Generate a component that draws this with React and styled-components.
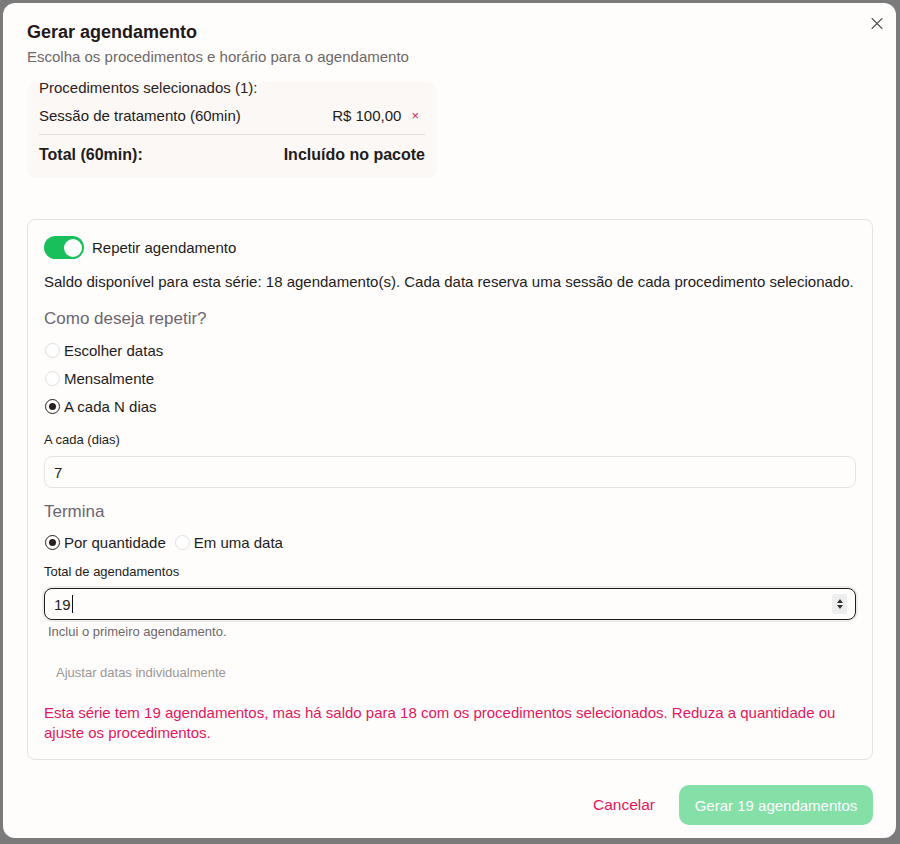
import styled, { createGlobalStyle } from "styled-components";
import { X } from "lucide-react";

const GlobalStyle = createGlobalStyle`
  * { box-sizing: border-box; }
  body {
    margin: 0;
    background: #7b7b7b;
    font-family: "Liberation Sans", Arial, sans-serif;
    color: #221c1c;
  }
`;

const Backdrop = styled.div`
  height: 844px;
  padding: 3px 4px 6px 3px;
  display: flex;
`;

const Modal = styled.div`
  position: relative;
  flex: 1;
  background: #fffdfc;
  border-radius: 12px;
  padding: 18px 23px 13px 24px;
  display: flex;
  flex-direction: column;
`;

const CloseButton = styled.button`
  position: absolute;
  top: 10px;
  right: 9px;
  width: 20px;
  height: 20px;
  border: 0;
  padding: 0;
  background: none;
  color: #555;
  display: flex;
  align-items: center;
  justify-content: center;
`;

const Title = styled.h2`
  margin: 0;
  font-size: 18px;
  line-height: 22px;
  font-weight: 600;
  color: #1f1919;
`;

const Subtitle = styled.p`
  margin: 3px 0 0;
  font-size: 15px;
  line-height: 22px;
  color: #6d6868;
`;

const Summary = styled.div`
  width: 410px;
  margin-top: 14px;
  background: #fcf8f6;
  border-radius: 8px;
  padding: 0 12px 11px;
`;

const SummaryTitle = styled.div`
  font-size: 15px;
  line-height: 12px;
  color: #2a2323;
`;

const SummaryRow = styled.div`
  display: flex;
  align-items: center;
  justify-content: space-between;
  margin-top: 11px;
  padding-bottom: 7px;
  border-bottom: 1px solid #e3dedc;
  font-size: 15px;
  line-height: 22px;
`;

const Price = styled.div`
  display: flex;
  align-items: center;
  gap: 10px;
  margin-right: 6px;
`;

const Remove = styled.span`
  color: #e0224a;
  font-size: 13px;
`;

const TotalRow = styled.div`
  display: flex;
  justify-content: space-between;
  margin-top: 8px;
  font-size: 16px;
  line-height: 24px;
  font-weight: 700;
`;

const Card = styled.section`
  margin-top: 41px;
  border: 1px solid #e6e2e0;
  border-radius: 8px;
  padding: 16px 16px 16px;
  display: flex;
  flex-direction: column;
`;

const ToggleRow = styled.label`
  display: flex;
  align-items: center;
  gap: 8px;
  font-size: 15px;
`;

const Switch = styled.span`
  width: 40px;
  height: 23px;
  border-radius: 12px;
  background: #19bf5b;
  display: flex;
  align-items: center;
  justify-content: flex-end;
  padding: 2px;
  &::after {
    content: "";
    width: 18px;
    height: 18px;
    border-radius: 50%;
    background: #fff;
  }
`;

const Text = styled.p`
  margin: ${(p) => p.$mt || 0}px 0 0;
  font-size: 15px;
  line-height: ${(p) => (p.$error ? 20 : 22)}px;
  color: ${(p) => (p.$error ? "#e3165c" : "#221c1c")};
`;

const SectionTitle = styled.h3`
  margin: ${(p) => p.$mt}px 0 0;
  font-size: 17px;
  line-height: 24px;
  font-weight: 400;
  color: #6b6670;
`;

const RadioGroup = styled.div`
  margin-top: ${(p) => (p.$inline ? 8 : 9)}px;
  display: flex;
  flex-direction: ${(p) => (p.$inline ? "row" : "column")};
  gap: 8px;
`;

const RadioOption = styled.label`
  display: flex;
  align-items: center;
  gap: 4px;
  height: 20px;
  font-size: 15px;
  color: #221c1c;
`;

const RadioCircle = styled.span`
  width: 15px;
  height: 15px;
  margin-left: 1px;
  border-radius: 50%;
  border: ${(p) => (p.$checked ? "1.5px solid #2a1e1e" : "1px solid #e2dddb")};
  background: #fff;
  display: flex;
  align-items: center;
  justify-content: center;
  &::after {
    content: "";
    display: ${(p) => (p.$checked ? "block" : "none")};
    width: 7px;
    height: 7px;
    border-radius: 50%;
    background: #2a1e1e;
  }
`;

const FieldLabel = styled.div`
  margin-top: ${(p) => p.$mt}px;
  font-size: 13px;
  line-height: 16px;
  color: #221c1c;
`;

const Field = styled.div`
  margin-top: 8px;
  height: 32px;
  border-radius: 8px;
  border: ${(p) => (p.$focused ? "1.5px solid #241b1b" : "1px solid #e8e3e1")};
  box-shadow: ${(p) => (p.$focused ? "0 0 0 2px #efebea" : "none")};
  background: #fffdfc;
  padding: 0 8px 0 9px;
  display: flex;
  align-items: center;
  font-size: 15px;
  color: #221c1c;
`;

const Caret = styled.span`
  width: 1px;
  height: 18px;
  background: #111;
  margin-left: 1px;
`;

const Spinner = styled.span`
  margin-left: auto;
  width: 15px;
  height: 20px;
  background: #efeeee;
  border-radius: 2px;
  display: flex;
  align-items: center;
  justify-content: center;
`;

const Helper = styled.div`
  margin: 5px 0 0 4px;
  font-size: 13px;
  line-height: 14px;
  color: #6d6868;
`;

const GhostButton = styled.button`
  align-self: flex-start;
  margin-top: 18px;
  height: 30px;
  padding: 0 12px;
  border: 0;
  background: none;
  font-family: inherit;
  font-size: 13px;
  color: #9a9595;
`;

const Footer = styled.div`
  margin-top: auto;
  display: flex;
  justify-content: flex-end;
  align-items: center;
  gap: 8px;
`;

const CancelButton = styled.button`
  height: 40px;
  padding: 0 16px;
  border: 0;
  background: none;
  font-family: inherit;
  font-size: 15.5px;
  color: #e3165c;
`;

const PrimaryButton = styled.button`
  height: 40px;
  width: 194px;
  padding: 0;
  border: 0;
  border-radius: 10px;
  background: #85e0a8;
  color: #fff;
  font-family: inherit;
  font-size: 15px;
  font-weight: 500;
`;

function Radio({ checked, children }) {
  return (
    <RadioOption>
      <RadioCircle $checked={checked} />
      {children}
    </RadioOption>
  );
}

export default function App() {
  return (
    <>
      <GlobalStyle />
      <Backdrop>
        <Modal>
          <CloseButton aria-label="Fechar">
            <X size={21} strokeWidth={1.3} />
          </CloseButton>
          <Title>Gerar agendamento</Title>
          <Subtitle>Escolha os procedimentos e horário para o agendamento</Subtitle>

          <Summary>
            <SummaryTitle>Procedimentos selecionados (1):</SummaryTitle>
            <SummaryRow>
              <span>Sessão de tratamento (60min)</span>
              <Price>
                R$ 100,00
                <Remove>×</Remove>
              </Price>
            </SummaryRow>
            <TotalRow>
              <span>Total (60min):</span>
              <span>Incluído no pacote</span>
            </TotalRow>
          </Summary>

          <Card>
            <ToggleRow>
              <Switch />
              Repetir agendamento
            </ToggleRow>
            <Text $mt={12}>
              Saldo disponível para esta série: 18 agendamento(s). Cada data reserva uma
              sessão de cada procedimento selecionado.
            </Text>

            <SectionTitle $mt={14}>Como deseja repetir?</SectionTitle>
            <RadioGroup>
              <Radio>Escolher datas</Radio>
              <Radio>Mensalmente</Radio>
              <Radio checked>A cada N dias</Radio>
            </RadioGroup>

            <FieldLabel $mt={16}>A cada (dias)</FieldLabel>
            <Field>7</Field>

            <SectionTitle $mt={12}>Termina</SectionTitle>
            <RadioGroup $inline>
              <Radio checked>Por quantidade</Radio>
              <Radio>Em uma data</Radio>
            </RadioGroup>

            <FieldLabel $mt={12}>Total de agendamentos</FieldLabel>
            <Field $focused>
              19
              <Caret />
              <Spinner>
                <svg width="8" height="14" viewBox="0 0 8 14">
                  <path d="M4 2 L7 6 H1 Z" fill="#333" />
                  <path d="M4 12 L7 8 H1 Z" fill="#333" />
                </svg>
              </Spinner>
            </Field>
            <Helper>Inclui o primeiro agendamento.</Helper>

            <GhostButton>Ajustar datas individualmente</GhostButton>

            <Text $mt={16} $error>
              Esta série tem 19 agendamentos, mas há saldo para 18 com os procedimentos
              selecionados. Reduza a quantidade ou ajuste os procedimentos.
            </Text>
          </Card>

          <Footer>
            <CancelButton>Cancelar</CancelButton>
            <PrimaryButton>Gerar 19 agendamentos</PrimaryButton>
          </Footer>
        </Modal>
      </Backdrop>
    </>
  );
}
